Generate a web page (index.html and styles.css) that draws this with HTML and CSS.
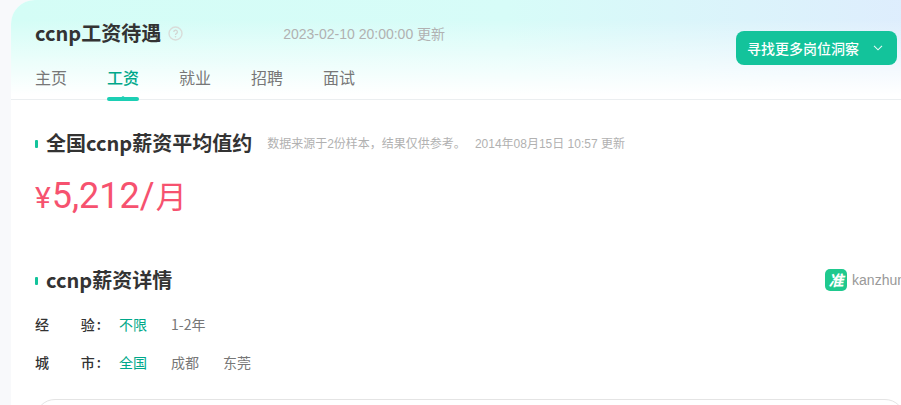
FILE: index.html
```html
<!DOCTYPE html>
<html lang="zh-CN">
<head>
<meta charset="utf-8">
<title>ccnp工资待遇</title>
<link rel="stylesheet" href="styles.css">
</head>
<body>
<main class="card">
  <header class="head">
    <div class="head-main">
      <div class="title-row">
        <h1 class="title">ccnp工资待遇</h1>
        <svg class="help" width="15" height="15" viewBox="0 0 15 15" aria-hidden="true"><circle cx="7.5" cy="7.5" r="6.5" fill="none" stroke="#d9dcd9" stroke-width="1.4"/><path d="M5.8 6a1.8 1.8 0 1 1 2.6 1.6c-.6.3-.9.6-.9 1.3" fill="none" stroke="#d2d5d2" stroke-width="1.2"/><circle cx="7.5" cy="10.8" r=".8" fill="#d2d5d2"/></svg>
        <span class="updated">2023-02-10 20:00:00 更新</span>
      </div>
      <nav class="tabs">
        <a class="tab">主页</a>
        <a class="tab tab-on">工资</a>
        <a class="tab">就业</a>
        <a class="tab">招聘</a>
        <a class="tab">面试</a>
      </nav>
    </div>
    <button class="cta">寻找更多岗位洞察
      <svg class="chev" width="10" height="6" viewBox="0 0 10 6" aria-hidden="true"><path d="M1 .8 5 4.8 9 .8" fill="none" stroke="#e6faf5" stroke-width="1.1"/></svg>
    </button>
  </header>
  <section class="avg">
    <div class="sec-head">
      <h2 class="sec-title">全国ccnp薪资平均值约</h2>
      <div class="notes">
        <span class="note note-src">数据来源于2份样本，结果仅供参考。</span>
        <span class="note note-date">2014年08月15日 10:57 更新</span>
      </div>
    </div>
    <p class="salary"><span class="yen">¥</span>5,212/<span class="unit">月</span></p>
  </section>
  <section class="detail">
    <div class="sec-head sec-head-split">
      <h2 class="sec-title">ccnp薪资详情</h2>
      <div class="brand"><span class="brand-mark">准</span><span class="brand-name">kanzhun</span></div>
    </div>
    <div class="filter">
      <span class="label"><b>经</b><b>验:</b></span>
      <a class="opt opt-on">不限</a>
      <a class="opt">1-2年</a>
    </div>
    <div class="filter">
      <span class="label"><b>城</b><b>市:</b></span>
      <a class="opt opt-on">全国</a>
      <a class="opt">成都</a>
      <a class="opt">东莞</a>
    </div>
    <div class="panel"></div>
  </section>
</main>
</body>
</html>
```

FILE: styles.css
```css
* { box-sizing: border-box; }
html, body { margin: 0; height: 100%; overflow: hidden; }
body {
  background: #f8f9fb;
  font-family: "Liberation Sans", "Noto Sans CJK SC", sans-serif;
  color: #333;
}
.card {
  margin-left: 11px;
  width: 1100px;
  height: 600px;
  background: #fff;
  border-radius: 24px 24px 0 0;
  overflow: hidden;
}
.head {
  height: 100px;
  padding: 0 0 0 24px;
  display: flex;
  border-bottom: 1px solid #ebeef0;
  background:
    linear-gradient(180deg, rgba(255,255,255,0) 20%, #fff 96%),
    linear-gradient(90deg, #d4fdf6 0%, #d7fcf8 45%, #deedfd 82%, #deedfd 100%);
}
.head-main { width: 701px; }
.title-row { display: flex; align-items: center; height: 24px; margin-top: 21px; }
.title {
  margin: 0;
  font: 700 20px/24px "Noto Sans CJK SC", sans-serif;
  color: #333;
}
.help { margin-left: 7px; }
.updated { margin-left: 100px; font-size: 14px; color: #b1b1b1; }
.tabs { display: flex; gap: 40px; margin-top: 8px; }
.tab {
  position: relative;
  font: 400 16px/48px "Noto Sans CJK SC", sans-serif;
  height: 47px;
  color: #777;
}
.tab-on { color: #00a88a; font-weight: 500; }
.tab-on::after {
  content: "";
  position: absolute;
  left: 0; right: 0; bottom: -1px;
  height: 4px;
  border-radius: 2px;
  background: #1ccfb4;
}
.tab-on::before {
  content: "";
  position: absolute;
  left: 50%; bottom: 2px;
  margin-left: -3px;
  border: 3px solid transparent;
  border-top: 0;
  border-bottom: 2px solid #1ccfb4;
}
.cta {
  margin-top: 31px;
  width: 161px;
  height: 34px;
  padding: 0 0 0 11px;
  border: 0;
  border-radius: 8px;
  background: #13c39b;
  color: #fff;
  font: 500 14px/34px "Noto Sans CJK SC", sans-serif;
  display: flex;
  align-items: center;
}
.chev { margin-left: 14px; }
.avg { padding: 29px 0 0 24px; height: 156px; }
.sec-head { display: flex; align-items: center; height: 28px; }
.sec-head-split { width: 870px; justify-content: space-between; }
.sec-title {
  position: relative;
  margin: 0;
  padding-left: 11px;
  font: 700 20px/28px "Noto Sans CJK SC", sans-serif;
  color: #333;
}
.sec-title::before {
  content: "";
  position: absolute;
  left: 0; top: 11px;
  width: 3px; height: 8px;
  border-radius: 1px;
  background: #13c39b;
}
.notes { display: flex; margin-top: -2px; }
.note { font-size: 12px; color: #b1b1b1; }
.note-src { margin-left: 15px; }
.note-date { margin-left: 9px; }
.salary {
  margin: 15px 0 0;
  font: 400 36px/48px Roboto, "Noto Sans CJK SC", sans-serif;
  color: #f6526f;
}
.yen { font-size: 30px; margin-right: 1px; }
.unit { font-size: 31px; margin-left: 1px; }
.detail { padding: 10px 0 0 24px; }
.brand { display: flex; align-items: center; gap: 5px; }
.brand-mark {
  width: 22px; height: 22px;
  border-radius: 5px;
  background: #1fc98e;
  color: #fff;
  font: italic 700 15px/22px "Noto Sans CJK SC", sans-serif;
  text-align: center;
}
.brand-name { font-size: 14px; color: #999; }
.filter { display: flex; align-items: center; height: 20px; margin-top: 18px; font: 14px/20px "Noto Sans CJK SC", sans-serif; }
.sec-head + .filter { margin-top: 20px; }
.label { display: flex; justify-content: space-between; width: 68px; margin-right: 16px; }
.label b { font-weight: 500; color: #333; letter-spacing: 2px; }
.opt { margin-right: 24px; color: #777; }
.opt-on { color: #00a88a; }
.panel {
  margin-top: 27px;
  width: 870px;
  height: 100px;
  border: 1px solid #e4e4e4;
  border-radius: 20px;
}
```
